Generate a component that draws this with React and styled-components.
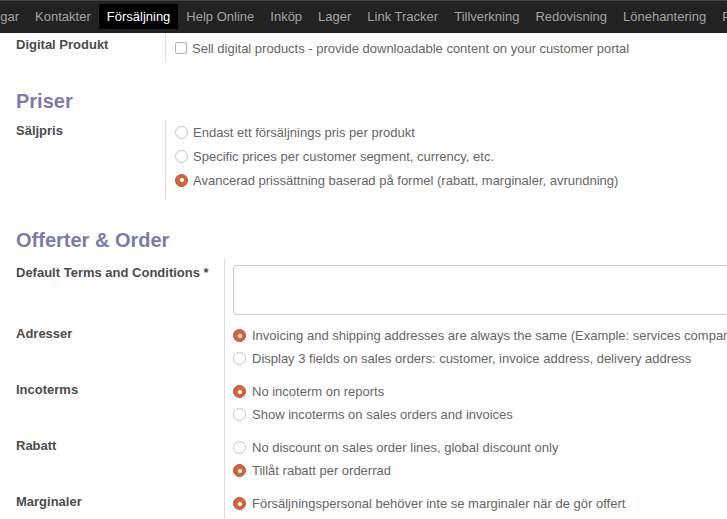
import React from 'react';
import styled, { createGlobalStyle } from 'styled-components';

const GlobalStyle = createGlobalStyle`
	html, body {
		margin: 0;
		padding: 0;
		background: #fff;
		overflow: hidden;
	}
	body {
		font-family: 'Liberation Sans', Arial, sans-serif;
		font-size: 13px;
		color: #666;
	}
`;

const Page = styled.div`
	width: 900px;
	height: 519px;
	overflow: hidden;
`;

const NavBar = styled.nav`
	height: 32px;
	background-color: #222;
	border-top: 1px solid #444;
	overflow: hidden;
`;

const NavList = styled.ul`
	display: flex;
	list-style: none;
	margin: 0 0 0 -59px;
	padding: 3px 0 0;
`;

const NavItem = styled.li`
	height: 25px;
	line-height: 26px;
	padding: 0 8px;
	white-space: nowrap;
	color: ${(p) => (p.$active ? '#fff' : '#a3a3a3')};
	background-color: ${(p) => (p.$active ? '#000' : 'transparent')};
`;

const Content = styled.div`
	padding-left: 16px;
`;

const Heading = styled.h2`
	margin: ${(p) => p.$top}px 0 7px;
	font-size: 20px;
	line-height: 24px;
	font-weight: bold;
	color: #7c7bad;
`;

const Row = styled.div`
	display: grid;
	grid-template-columns: ${(p) => p.$labelWidth}px 1fr;
`;

const Label = styled.div`
	padding-top: ${(p) => p.$pad ?? 3}px;
	line-height: 16px;
	font-weight: bold;
	color: #4c4c4c;
	white-space: nowrap;
`;

const Field = styled.div`
	border-left: 1px solid #ddd;
	padding: ${(p) => p.$pt ?? 0}px 0 ${(p) => p.$pb ?? 0}px ${(p) => p.$pl}px;
`;

const Option = styled.div`
	display: flex;
	align-items: center;
	gap: ${(p) => p.$gap ?? 5}px;
	height: ${(p) => p.$h}px;
	white-space: nowrap;
`;

const Radio = styled.span`
	box-sizing: border-box;
	width: 13px;
	height: 13px;
	border-radius: 50%;
	flex: none;
	display: flex;
	align-items: center;
	justify-content: center;
	border: 1px solid ${(p) => (p.$checked ? '#b9522e' : '#c4c4c4')};
	background: ${(p) => (p.$checked ? '#d4663f' : '#fff')};

	&::after {
		content: '';
		width: 4px;
		height: 4px;
		border-radius: 50%;
		background: #fff;
		display: ${(p) => (p.$checked ? 'block' : 'none')};
	}
`;

const Checkbox = styled.span`
	box-sizing: border-box;
	width: 12px;
	height: 12px;
	flex: none;
	border: 1px solid #b5b5b5;
	border-radius: 2px;
	background: #fff;
`;

const TextArea = styled.div`
	box-sizing: border-box;
	width: 600px;
	height: 50px;
	border: 1px solid #ccc;
	border-radius: 3px;
`;

const menu = [
	'Inställningar',
	'Kontakter',
	'Försäljning',
	'Help Online',
	'Inköp',
	'Lager',
	'Link Tracker',
	'Tillverkning',
	'Redovisning',
	'Lönehantering',
	'Projekt',
];

const orderSettings = [
	{
		label: 'Adresser',
		options: [
			['Invoicing and shipping addresses are always the same (Example: services companies)', true],
			['Display 3 fields on sales orders: customer, invoice address, delivery address', false],
		],
	},
	{
		label: 'Incoterms',
		options: [
			['No incoterm on reports', true],
			['Show incoterms on sales orders and invoices', false],
		],
	},
	{
		label: 'Rabatt',
		options: [
			['No discount on sales order lines, global discount only', false],
			['Tillåt rabatt per orderrad', true],
		],
	},
	{
		label: 'Marginaler',
		options: [['Försäljningspersonal behöver inte se marginaler när de gör offert', true]],
	},
];

export default function App() {
	return (
		<Page>
			<GlobalStyle />
			<NavBar>
				<NavList>
					{menu.map((m) => (
						<NavItem key={m} $active={m === 'Försäljning'}>
							{m}
						</NavItem>
					))}
				</NavList>
			</NavBar>
			<Content>
				<Row $labelWidth={149}>
					<Label $pad={4}>Digital Produkt</Label>
					<Field $pl={9} $pt={3} $pb={2}>
						<Option $h={24}>
							<Checkbox />
							Sell digital products - provide downloadable content on your customer portal
						</Option>
					</Field>
				</Row>

				<Heading $top={27}>Priser</Heading>
				<Row $labelWidth={149}>
					<Label>Säljpris</Label>
					<Field $pl={9} $pb={7}>
						<Option $h={24}>
							<Radio />
							Endast ett försäljnings pris per produkt
						</Option>
						<Option $h={24}>
							<Radio />
							Specific prices per customer segment, currency, etc.
						</Option>
						<Option $h={24}>
							<Radio $checked />
							Avancerad prissättning baserad på formel (rabatt, marginaler, avrundning)
						</Option>
					</Field>
				</Row>

				<Heading $top={29}>Offerter &amp; Order</Heading>
				<Row $labelWidth={208}>
					<Label $pad={6}>Default Terms and Conditions *</Label>
					<Field $pl={8} $pt={6} $pb={9}>
						<TextArea />
					</Field>
				</Row>
				{orderSettings.map((s) => (
					<Row key={s.label} $labelWidth={208}>
						<Label $pad={2}>{s.label}</Label>
						<Field $pl={8} $pb={10}>
							{s.options.map(([text, checked]) => (
								<Option key={text} $h={23} $gap={6}>
									<Radio $checked={checked} />
									{text}
								</Option>
							))}
						</Field>
					</Row>
				))}
			</Content>
		</Page>
	);
}
